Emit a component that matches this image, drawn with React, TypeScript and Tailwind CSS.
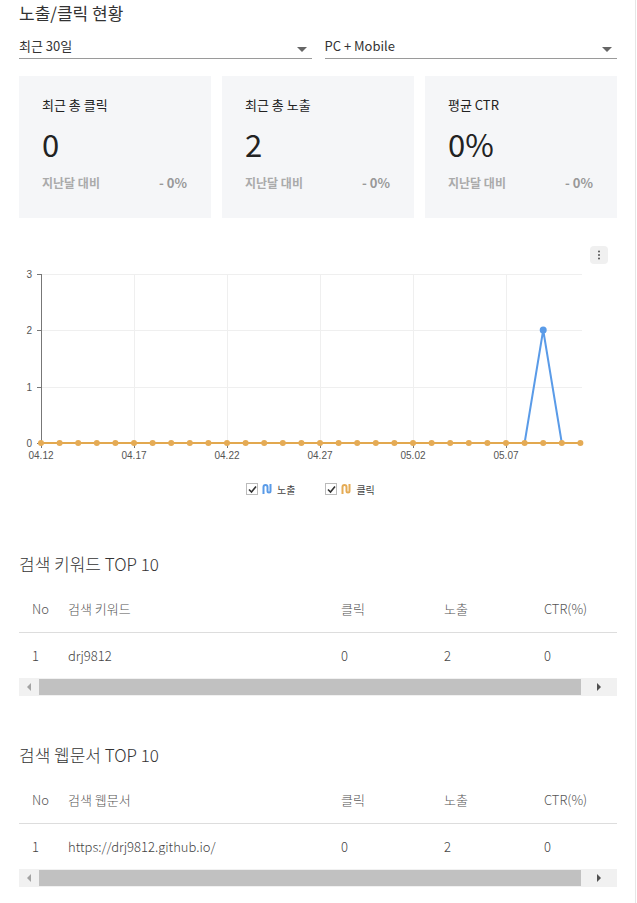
import React from "react";

const font = { fontFamily: '"Noto Sans CJK KR", "Noto Sans", sans-serif' };

const days = Array.from({ length: 30 }, (_, i) => i);
const dayX = (i: number) => 41 + i * 18.6;
const xLabels = ["04.12", "04.17", "04.22", "04.27", "05.02", "05.07"];
const yTicks = [
    { v: "3", y: 274 },
    { v: "2", y: 330 },
    { v: "1", y: 387 },
    { v: "0", y: 443 },
];

function Select({ label }: { label: string }) {
    return (
        <div className="flex-1 h-[25px] border-b border-[#9a9a9a] flex items-center justify-between">
            <span className="text-[13px] leading-6 text-[#333]">{label}</span>
            <span className="mr-[5px] mt-[7px] w-0 h-0 border-l-[5px] border-r-[5px] border-t-[5px] border-l-transparent border-r-transparent border-t-[#666]"></span>
        </div>
    );
}

function StatCard({ title, value }: { title: string; value: string }) {
    return (
        <div className="flex-1 h-[142px] bg-[#f5f6f8] pt-[19px] pl-[23px] pr-[24px]">
            <div className="text-[13px] leading-5 text-[#222]">{title}</div>
            <div className="mt-[9px] text-[31px] leading-10 text-[#222]">{value}</div>
            <div className="mt-[10px] flex justify-between items-center leading-[18px]">
                <span className="text-[12px] font-bold text-[#aaa]">지난달 대비</span>
                <span className="text-[13px] font-bold text-[#999]">- 0%</span>
            </div>
        </div>
    );
}

function Chart() {
    return (
        <svg width="598" height="206" viewBox="19 264 598 206" className="block">
            {/* grid */}
            {yTicks.slice(0, 3).map((t) => (
                <line key={t.v} x1={41} x2={582} y1={t.y + 0.5} y2={t.y + 0.5} stroke="#efefef" />
            ))}
            {xLabels.slice(1).map((_, i) => (
                <line key={i} x1={134 + i * 93 + 0.5} x2={134 + i * 93 + 0.5} y1={274} y2={443} stroke="#efefef" />
            ))}
            {/* axes */}
            <line x1={41.5} x2={41.5} y1={274} y2={444} stroke="#777" />
            {yTicks.map((t) => (
                <g key={t.v}>
                    <line x1={37} x2={41} y1={t.y + 0.5} y2={t.y + 0.5} stroke="#777" />
                    <text x={32} y={t.y + 3.5} textAnchor="end" fontSize="10" fill="#555" fontFamily="Liberation Sans, Arial, sans-serif">
                        {t.v}
                    </text>
                </g>
            ))}
            <line x1={41} x2={582} y1={443.5} y2={443.5} stroke="#666" />
            {xLabels.map((l, i) => (
                <g key={l}>
                    <line x1={41.5 + i * 93} x2={41.5 + i * 93} y1={443} y2={448} stroke="#777" />
                    <text x={41 + i * 93} y={459} textAnchor="middle" fontSize="10" fill="#555" fontFamily="Liberation Sans, Arial, sans-serif">
                        {l}
                    </text>
                </g>
            ))}
            {/* 노출 */}
            <polyline
                points={`${dayX(26)},443 ${dayX(27)},330 ${dayX(28)},443`}
                fill="none"
                stroke="#5a9be8"
                strokeWidth="2"
                strokeLinejoin="round"
            />
            <circle cx={dayX(27)} cy={330} r={3.5} fill="#5a9be8" />
            {/* 클릭 */}
            <line x1={41} x2={581} y1={443} y2={443} stroke="#e2a84f" strokeWidth="2" />
            {days.map((i) => (
                <circle key={i} cx={dayX(i)} cy={443} r={3} fill="#e5ab55" />
            ))}
        </svg>
    );
}

function LegendIcon({ color }: { color: string }) {
    return (
        <svg width="10" height="12" viewBox="0 0 10 12">
            <path d="M1.5 11 V4 a2 2 0 0 1 4 0 V8 a1.5 1.5 0 0 0 3 0 V1" fill="none" stroke={color} strokeWidth="2" />
        </svg>
    );
}

function LegendItem({ color, label }: { color: string; label: string }) {
    return (
        <div className="flex items-center">
            <span className="w-[12px] h-[12px] border border-[#bbb] bg-white flex items-center justify-center">
                <svg width="9" height="9" viewBox="0 0 9 9">
                    <path d="M1 4.5 L3.5 7 L8 1.5" fill="none" stroke="#333" strokeWidth="1.6" />
                </svg>
            </span>
            <span className="ml-[4px]">
                <LegendIcon color={color} />
            </span>
            <span className="ml-[5px] text-[10px] text-[#444]">{label}</span>
        </div>
    );
}

function ScrollBar() {
    return (
        <div className="h-[18px] bg-[#f1f1f1] flex items-center">
            <div className="w-[20px] flex justify-center">
                <span className="w-0 h-0 border-t-[4px] border-b-[4px] border-r-[4px] border-t-transparent border-b-transparent border-r-[#a3a3a3]"></span>
            </div>
            <div className="w-[542px] h-[16px] bg-[#c1c1c1]"></div>
            <div className="flex-1 flex justify-center">
                <span className="w-0 h-0 border-t-[4px] border-b-[4px] border-l-[4px] border-t-transparent border-b-transparent border-l-[#505050]"></span>
            </div>
        </div>
    );
}

function TopTable({ title, colName, value }: { title: string; colName: string; value: string }) {
    const cols = "grid grid-cols-[36px_273px_103px_100px_1fr] pl-[13px] items-center";
    return (
        <section>
            <h2 className="text-[17px] leading-[26px] font-light text-[#333]">{title}</h2>
            <div className={`${cols} mt-[8px] h-[48px] border-b border-[#ddd] text-[13px] font-light text-[#555]`}>
                <span>No</span>
                <span>{colName}</span>
                <span>클릭</span>
                <span>노출</span>
                <span>CTR(%)</span>
            </div>
            <div className={`${cols} h-[45px] text-[13px] font-light text-[#444]`}>
                <span>1</span>
                <span>{value}</span>
                <span>0</span>
                <span>2</span>
                <span>0</span>
            </div>
            <ScrollBar />
        </section>
    );
}

export default function App() {
    return (
        <div className="w-[636px] min-h-[903px] bg-white border-r border-[#e6e6e6]" style={font}>
            <div className="pl-[19px] w-[617px]">
                <h1 className="text-[17px] leading-[26px] text-[#333]">노출/클릭 현황</h1>

                <div className="mt-[8px] flex gap-[13px]">
                    <Select label="최근 30일" />
                    <Select label="PC + Mobile" />
                </div>

                <div className="mt-[17px] flex gap-[11px]">
                    <StatCard title="최근 총 클릭" value="0" />
                    <StatCard title="최근 총 노출" value="2" />
                    <StatCard title="평균 CTR" value="0%" />
                </div>

                <div className="mt-[28px] flex justify-end pr-[9px]">
                    <button className="w-[18px] h-[18px] rounded bg-[#f0f0f0] flex items-center justify-center">
                        <svg width="4" height="10" viewBox="0 0 4 10">
                            <circle cx="2" cy="1.5" r="1" fill="#555" />
                            <circle cx="2" cy="5" r="1" fill="#555" />
                            <circle cx="2" cy="8.5" r="1" fill="#555" />
                        </svg>
                    </button>
                </div>
                <Chart />

                <div className="mt-[10px] h-[18px] flex items-center gap-[30px] pl-[227px]">
                    <LegendItem color="#5a9be8" label="노출" />
                    <LegendItem color="#e5ab55" label="클릭" />
                </div>

                <div className="mt-[53px]">
                    <TopTable title="검색 키워드 TOP 10" colName="검색 키워드" value="drj9812" />
                </div>
                <div className="mt-[46px]">
                    <TopTable title="검색 웹문서 TOP 10" colName="검색 웹문서" value="https://drj9812.github.io/" />
                </div>
            </div>
        </div>
    );
}
